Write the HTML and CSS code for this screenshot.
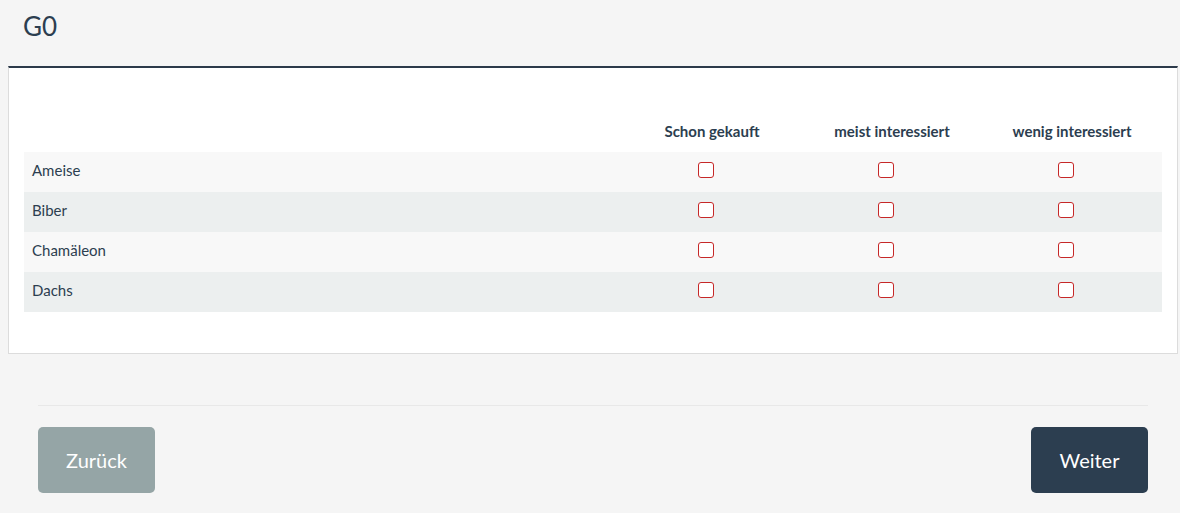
FILE: index.html
```html
<!DOCTYPE html>
<html lang="de">
<head>
<meta charset="utf-8">
<link rel="stylesheet" href="styles.css">
</head>
<body>
<header class="page-head"><h1 class="title">G0</h1></header>
<main class="card">
  <table class="matrix">
    <thead>
      <tr><th class="label-col"></th><th>Schon gekauft</th><th>meist interessiert</th><th>wenig interessiert</th></tr>
    </thead>
    <tbody>
      <tr class="odd"><td class="label">Ameise</td><td><span class="box"></span></td><td><span class="box"></span></td><td><span class="box"></span></td></tr>
      <tr class="even"><td class="label">Biber</td><td><span class="box"></span></td><td><span class="box"></span></td><td><span class="box"></span></td></tr>
      <tr class="odd"><td class="label">Chamäleon</td><td><span class="box"></span></td><td><span class="box"></span></td><td><span class="box"></span></td></tr>
      <tr class="even"><td class="label">Dachs</td><td><span class="box"></span></td><td><span class="box"></span></td><td><span class="box"></span></td></tr>
    </tbody>
  </table>
</main>
<footer class="nav">
  <div class="nav-inner">
    <button class="btn btn-back">Zurück</button>
    <button class="btn btn-next">Weiter</button>
  </div>
</footer>
</body>
</html>
```
FILE: styles.css
```css
html, body { margin: 0; padding: 0; }
body {
  background: #f5f5f5;
  font-family: Lato, "Open Sans", sans-serif;
  color: #2c3e50;
  width: 1180px;
}
.page-head { height: 66px; padding-left: 23px; display: flex; align-items: center; }
.title {
  margin: 0;
  font-weight: 400;
  font-size: 26px;
  color: #2c3e50;
  position: relative;
  top: -7px;
}
.card {
  margin: 0 2px 0 8px;
  background: #fff;
  border: 1px solid #dcdcdc;
  border-top: 2px solid #2c3a4a;
  padding: 53px 15px 41px 15px;
}
.matrix { width: 100%; border-collapse: collapse; font-size: 15px; }
.matrix th {
  font-weight: 700;
  font-size: 15px;
  width: 180px;
  text-align: center;
  padding: 0 0 11px 0;
  height: 20px;
}
.matrix th.label-col { width: auto; }
.matrix td { height: 40px; padding: 0; text-align: center; vertical-align: middle; }
.matrix td.label { text-align: left; height: 36px; padding: 0 0 4px 8px; }
.odd { background: #f8f8f8; }
.even { background: #ecefef; }
.box {
  display: inline-block;
  width: 14px;
  height: 14px;
  border: 1px solid #c62828;
  border-radius: 3px;
  background: #fff;
  margin-right: 12px;
  vertical-align: middle;
  position: relative;
  top: -4px;
}
.nav { padding: 51px 32px 0 38px; }
.nav-inner {
  border-top: 1px solid #e8e8e8;
  padding-top: 21px;
  display: flex;
  justify-content: space-between;
}
.btn {
  width: 117px;
  height: 66px;
  border: 0;
  border-radius: 5px;
  color: #fff;
  font-family: Lato, sans-serif;
  font-size: 20px;
}
.btn-back { background: #95a5a6; }
.btn-next { background: #2c3e50; }
```
